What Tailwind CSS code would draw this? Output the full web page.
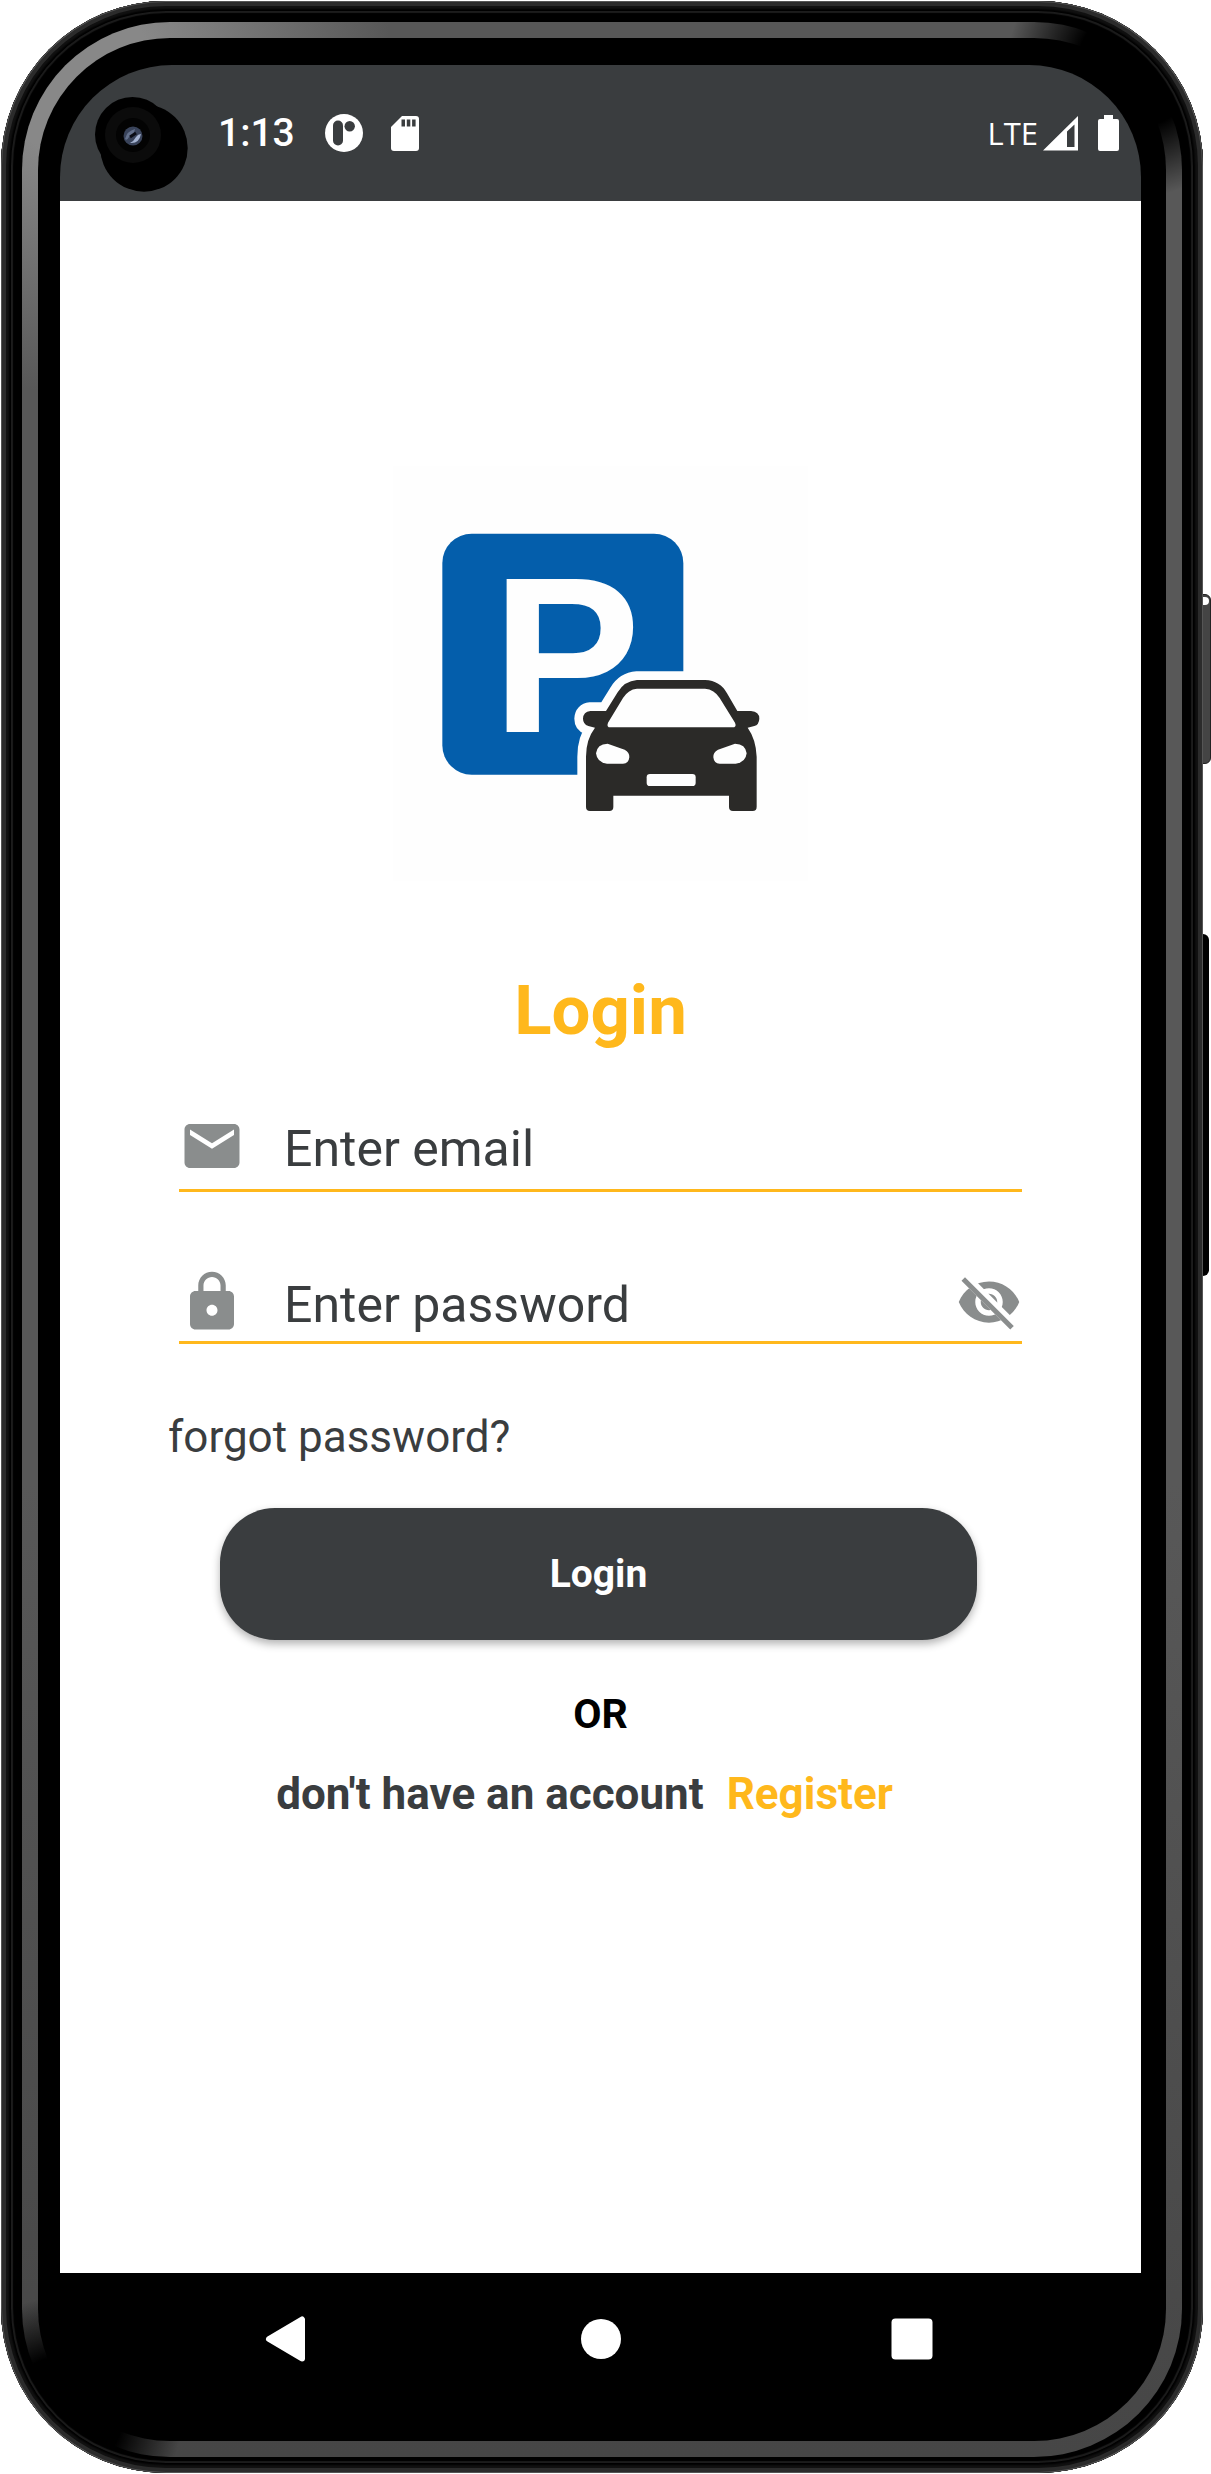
<!DOCTYPE html>
<html lang="en">
<head>
<meta charset="utf-8">
<meta name="viewport" content="width=device-width, initial-scale=1">
<title>Login</title>
<script src="https://cdn.jsdelivr.net/npm/@tailwindcss/browser@4"></script>
</head>
<body class="bg-white font-['Roboto',sans-serif] text-[#3a3d3f]">
<div class="relative flex min-h-screen flex-col pt-px pr-2 pb-px pl-px">
  <!-- side buttons -->
  <div class="absolute top-[594px] right-0 h-[170px] w-[10px] rounded-r-md border border-[#222] bg-[#444]"></div>
  <div class="absolute top-[597px] right-[2px] h-[8px] w-[6px] rounded-r-full bg-white"></div>
  <div class="absolute top-[934px] right-[2px] h-[342px] w-[8px] rounded-r-md bg-black"></div>

  <!-- device body -->
  <div class="relative flex flex-1 flex-col rounded-[165px] bg-black px-[21px] pt-[21px] pb-[16px] shadow-[inset_0_0_0_1px_#555,inset_0_0_0_5px_#2b2b2b,inset_0_0_2px_8px_#111,inset_0_0_0_10px_#000,inset_0_0_1px_12px_#1c1c1c,inset_0_0_0_14px_#000]">
    <div class="flex flex-1 flex-col rounded-[148px] bg-[radial-gradient(circle_at_calc(100%-45px)_45px,#000_60px,transparent_130px),radial-gradient(circle_at_40px_calc(100%-40px),#000_60px,transparent_120px),radial-gradient(circle_at_50px_50px,#888_80px,transparent_320px),linear-gradient(#585858,#585858_60%,#464646)] p-[16px]">
      <div class="flex flex-1 flex-col rounded-[132px] bg-black pt-[27px] pr-[25px] pl-[22px]">

        <header class="relative flex h-[136px] items-center rounded-t-[112px] bg-[#3a3d3f] pr-[22px] pl-[158px] text-white">
          <svg class="absolute top-[31px] left-[34px] h-[98px] w-[98px]" viewBox="94 96 98 98" aria-hidden="true">
            <circle cx="132.500" cy="134.500" r="37.500"/>
            <circle cx="144" cy="148" r="43.700"/>
            <circle cx="133" cy="135" r="28" fill="#0b0b0b"/>
            <circle cx="133" cy="135" r="17" fill="#030303"/>
            <circle cx="133" cy="136" r="9.500" fill="#39435a"/>
            <path d="M125 139q2-8 10-10-1 6-6 8-2 4-4 2z" fill="#64718c"/>
            <path d="M130 143q9 1 11-9-3 0-5 3-2 4-6 6z" fill="#a5b4d2"/>
            <path d="M130 137l6-4" stroke="#0a0c14" stroke-width="3"/>
          </svg>
          <time class="text-[39px] leading-[48px] font-medium">1:13</time>
          <svg class="ml-[30px] h-[38px] w-[38px]" viewBox="0 0 38 38" aria-hidden="true">
            <circle cx="19" cy="19" r="19" fill="#fff"/>
            <rect x="8" y="6.500" width="10" height="25" rx="5" fill="#3a3d3f"/>
            <circle cx="24.700" cy="12.300" r="5.200" fill="#3a3d3f"/>
          </svg>
          <svg class="ml-[28px] h-[35px] w-[28px]" viewBox="0 0 28 35" aria-hidden="true">
            <path d="M11 0h14q3 0 3 3v29q0 3-3 3H3q-3 0-3-3V11z" fill="#fff"/>
            <path d="M10.500 3.500h3.500v7h-3.500zM15.800 3.500h3.500v7h-3.500zM21.100 3.500h3.500v7h-3.500z" fill="#3a3d3f"/>
          </svg>
          <span class="ml-auto font-['Open_Sans',sans-serif] text-[31px] leading-[40px]">LTE</span>
          <svg class="ml-[5px] h-[35px] w-[35px]" viewBox="0 0 35 35" aria-hidden="true">
            <path fill-rule="evenodd" d="M0 34.500L35 0v34.500zM24 15.500v15.500h7.500V8.500z" fill="#fff"/>
          </svg>
          <svg class="ml-[20px] h-[36px] w-[21px]" viewBox="0 0 21 36" aria-hidden="true">
            <path d="M6 0h9v4h4q2 0 2 2v28q0 2-2 2H2q-2 0-2-2V6q0-2 2-2h4z" fill="#fff"/>
          </svg>
        </header>

        <main class="flex flex-1 flex-col items-center bg-white px-[108px] pt-[265px] pb-12">
          <svg class="h-[415px] w-[415px] bg-[#fefefe]" viewBox="38 48 1245 1245" role="img" aria-label="Parking">
            <rect x="186" y="251" width="723" height="723" rx="88" fill="#045eab"/>
            <text x="334" y="845" font-family="Liberation Sans, Arial, sans-serif" font-weight="700" font-size="670" fill="#fefefe">P</text>
            <path d="M770 690H974Q1020 692 1040 730L1071 783H1112Q1137 785 1137 806Q1136 824 1122 828L1102 833Q1127 868 1129 920V1070Q1129 1083 1117 1083H1058Q1046 1083 1046 1071V1037H699V1071Q699 1083 687 1083H629Q617 1083 617 1071V920Q617 868 644 833L624 828Q608 822 608 806Q609 785 630 783H677L712 727Q732 693 770 690z" fill="#fefefe" stroke="#fefefe" stroke-width="52" stroke-linejoin="round"/>
            <path d="M770 690H974Q1020 692 1040 730L1071 783H1112Q1137 785 1137 806Q1136 824 1122 828L1102 833Q1127 868 1129 920V1070Q1129 1083 1117 1083H1058Q1046 1083 1046 1071V1037H699V1071Q699 1083 687 1083H629Q617 1083 617 1071V920Q617 868 644 833L624 828Q608 822 608 806Q609 785 630 783H677L712 727Q732 693 770 690z" fill="#2b2a28"/>
            <path d="M770 716H974Q1002 718 1018 744L1064 818Q1070 832 1056 832H690Q678 832 683 818L728 744Q744 718 770 716zM682 881L733 899Q748 907 747 922Q745 941 728 941H680Q650 938 647 910Q650 882 682 881zM1064 881L1013 899Q998 907 999 922Q1001 941 1018 941H1066Q1096 938 1099 910Q1096 882 1064 881z" fill="#fefefe"/>
            <rect x="799" y="972" width="147" height="36" rx="10" fill="#fefefe"/>
          </svg>

          <h1 class="mt-[90px] text-[69px] leading-[80px] font-bold text-[#ffb81c]">Login</h1>

          <form class="mt-[62px] flex w-full flex-col" onsubmit="return false">
            <div class="mx-[11px] flex items-start gap-[39px] border-b-3 border-[#ffb81c] pb-1">
              <label for="email" aria-label="Email">
                <svg class="h-[66px] w-[66px] fill-[#8a8d8d]" viewBox="0 0 24 24" aria-hidden="true"><path d="M20 4H4c-1.100 0-2 .9-2 2v12c0 1.100.9 2 2 2h16c1.100 0 2-.9 2-2V6c0-1.100-.9-2-2-2zm0 4l-8 5-8-5V6l8 5 8-5v2z"/></svg>
              </label>
              <input id="email" type="email" placeholder="Enter email" class="h-[72px] min-w-0 flex-1 text-[50px] outline-none placeholder:text-[#3a3d3f]">
            </div>
            <div class="mx-[11px] mt-[77px] flex items-start gap-[39px] border-b-3 border-[#ffb81c]">
              <label for="password" aria-label="Password">
                <svg class="h-[66px] w-[66px] fill-[#8a8d8d]" viewBox="0 0 24 24" aria-hidden="true"><path d="M18 8h-1V6c0-2.760-2.240-5-5-5S7 3.240 7 6v2H6c-1.100 0-2 .9-2 2v10c0 1.100.9 2 2 2h12c1.100 0 2-.9 2-2V10c0-1.100-.9-2-2-2zm-6 9c-1.100 0-2-.9-2-2s.9-2 2-2 2 .9 2 2-.9 2-2 2zm3.100-9H8.900V6c0-1.710 1.390-3.100 3.100-3.100s3.100 1.390 3.100 3.100v2z"/></svg>
              </label>
              <input id="password" type="password" placeholder="Enter password" class="h-[72px] min-w-0 flex-1 text-[50px] outline-none placeholder:text-[#3a3d3f]">
              <button type="button" aria-label="Show password">
                <svg class="h-[66px] w-[66px]" viewBox="0 0 24 24" aria-hidden="true">
                  <path fill="#8a8d8d" d="M12 4.500C7 4.500 2.730 7.610 1 12c1.730 4.390 6 7.500 11 7.500s9.270-3.110 11-7.500c-1.730-4.390-6-7.500-11-7.500zM12 17c-2.760 0-5-2.240-5-5s2.240-5 5-5 5 2.240 5 5-2.240 5-5 5zm0-8c-1.660 0-3 1.340-3 3s1.340 3 3 3 3-1.340 3-3-1.340-3-3-3z"/>
                  <path fill="#fff" d="M2 4.270L19.730 22 22.270 19.460 4.540 1.730z"/>
                  <path d="M3.270 4.270L19.740 20.740" stroke="#8a8d8d" stroke-width="1.800" stroke-linecap="square"/>
                </svg>
              </button>
            </div>
            <a href="#" class="mt-[67px] self-start text-[44px] leading-[52px]">forgot password?</a>
            <button type="submit" class="mt-[45px] mr-[56px] ml-[52px] h-[132px] rounded-[55px] bg-[#3a3d3f] text-[39px] font-bold text-white shadow-[0_4px_8px_rgba(0,0,0,0.3)]">Login</button>
          </form>

          <p class="mt-[50px] text-[41px] leading-[48px] font-bold text-black">OR</p>
          <p class="mt-[30px] flex gap-[23px] pr-[32px] text-[44px] leading-[52px] font-bold whitespace-nowrap">
            <span>don't have an account</span>
            <a href="#" class="text-[#ffb81c]">Register</a>
          </p>
        </main>

        <nav class="flex justify-between px-[196px] pt-[33px] pb-[69px]" aria-label="System">
          <button type="button" aria-label="Back"><svg class="h-[66px] w-[66px] fill-white stroke-white" viewBox="0 0 66 66"><path d="M13 33L46 13.500v39z" stroke-width="6" stroke-linejoin="round"/></svg></button>
          <button type="button" aria-label="Home"><svg class="h-[66px] w-[66px] fill-white" viewBox="0 0 66 66"><circle cx="33" cy="33" r="20"/></svg></button>
          <button type="button" aria-label="Recent apps"><svg class="h-[66px] w-[66px] fill-white" viewBox="0 0 66 66"><rect x="12.500" y="12.500" width="41" height="41" rx="4"/></svg></button>
        </nav>
      </div>
    </div>
  </div>
</div>
</body>
</html>
